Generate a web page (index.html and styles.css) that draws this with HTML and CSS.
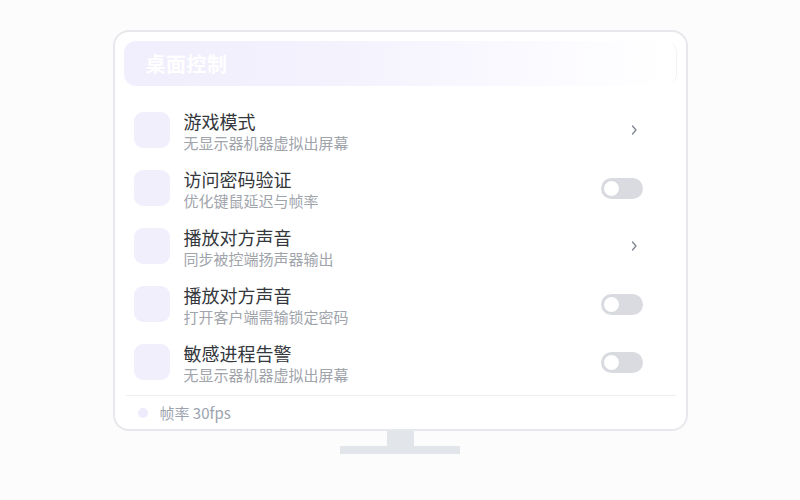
FILE: index.html
```html
<!DOCTYPE html>
<html lang="zh-CN">
<head>
<meta charset="utf-8">
<link rel="stylesheet" href="styles.css">
</head>
<body>
<div class="stage">
  <div class="monitor">
    <div class="header">
      <span class="header-title">桌面控制</span>
      <span class="header-badge">60</span>
    </div>
    <div class="list">
      <div class="row">
        <div class="icon"></div>
        <div class="texts"><div class="title">游戏模式</div><div class="sub">无显示器机器虚拟出屏幕</div></div>
        <div class="action"><svg class="chev" width="8" height="12" viewBox="0 0 8 12"><path d="M2.5 2 L6 6 L2.5 10" fill="none" stroke="#7b818b" stroke-width="1.2" stroke-linecap="round" stroke-linejoin="round"/></svg></div>
      </div>
      <div class="row">
        <div class="icon"></div>
        <div class="texts"><div class="title">访问密码验证</div><div class="sub">优化键鼠延迟与帧率</div></div>
        <div class="action"><span class="toggle"><span class="knob"></span></span></div>
      </div>
      <div class="row">
        <div class="icon"></div>
        <div class="texts"><div class="title">播放对方声音</div><div class="sub">同步被控端扬声器输出</div></div>
        <div class="action"><svg class="chev" width="8" height="12" viewBox="0 0 8 12"><path d="M2.5 2 L6 6 L2.5 10" fill="none" stroke="#7b818b" stroke-width="1.2" stroke-linecap="round" stroke-linejoin="round"/></svg></div>
      </div>
      <div class="row">
        <div class="icon"></div>
        <div class="texts"><div class="title">播放对方声音</div><div class="sub">打开客户端需输锁定密码</div></div>
        <div class="action"><span class="toggle"><span class="knob"></span></span></div>
      </div>
      <div class="row">
        <div class="icon"></div>
        <div class="texts"><div class="title">敏感进程告警</div><div class="sub">无显示器机器虚拟出屏幕</div></div>
        <div class="action"><span class="toggle"><span class="knob"></span></span></div>
      </div>
    </div>
    <div class="footer">
      <span class="dot"></span>
      <span class="footer-text">帧率 30fps</span>
    </div>
  </div>
  <div class="neck"></div>
  <div class="base"></div>
</div>
</body>
</html>
```

FILE: styles.css
```css
html, body {
  margin: 0;
  padding: 0;
  background: #fcfcfd;
  font-family: "Noto Sans CJK SC", "Noto Sans", sans-serif;
}
.stage {
  width: 800px;
  height: 500px;
  display: flex;
  flex-direction: column;
  align-items: center;
  padding-top: 30px;
  box-sizing: border-box;
}
.monitor {
  width: 575px;
  height: 401px;
  box-sizing: border-box;
  border: 2px solid #e6e8ec;
  border-radius: 16px;
  background: #ffffff;
  padding: 9px 9px 0;
  display: flex;
  flex-direction: column;
}
.header {
  height: 45px;
  flex: none;
  border-radius: 12px;
  background: linear-gradient(90deg, #f1eefd 0%, #f4f2fd 40%, #fbfaff 75%, #ffffff 100%);
  border-right: 1px solid #f1f2f4;
  display: flex;
  align-items: center;
  justify-content: space-between;
  padding: 0 22px;
  box-sizing: border-box;
}
.header-title {
  color: #ffffff;
  font-size: 20px;
  font-weight: 700;
  letter-spacing: 0.5px;
}
.header-badge {
  color: #ffffff;
  font-size: 14px;
  font-weight: 700;
  margin-right: 8px;
}
.list {
  margin-top: 15px;
  display: flex;
  flex-direction: column;
}
.row {
  height: 58px;
  box-sizing: border-box;
  padding: 11px 34px 11px 10px;
  display: flex;
  align-items: flex-start;
}
.icon {
  width: 36px;
  height: 36px;
  border-radius: 9px;
  background: #f2effd;
  flex: none;
}
.texts {
  margin-left: 14px;
  margin-top: -2px;
  flex: 1;
}
.title {
  font-size: 18px;
  line-height: 23px;
  color: #34373c;
}
.sub {
  font-size: 15px;
  line-height: 20px;
  color: #a0a4ab;
}
.action {
  align-self: center;
  width: 42px;
  display: flex;
  justify-content: flex-end;
}
.chev {
  display: block;
  margin-right: 5px;
}
.toggle {
  width: 42px;
  height: 21px;
  border-radius: 11px;
  background: #d9dbe1;
  display: flex;
  align-items: center;
  padding-left: 2px;
  box-sizing: border-box;
}
.knob {
  width: 17px;
  height: 17px;
  border-radius: 50%;
  background: #ffffff;
  box-sizing: border-box;
  border: 1px solid #d3d6dc;
}
.footer {
  margin-top: 4px;
  border-top: 1px solid #eceef1;
  margin-left: 2px;
  margin-right: 1px;
  flex: 1;
  display: flex;
  align-items: center;
  padding-left: 12px;
}
.dot {
  width: 10px;
  height: 10px;
  border-radius: 50%;
  background: #eeebfd;
}
.footer-text {
  margin-left: 12px;
  font-size: 15px;
  color: #9ca3af;
}
.neck {
  width: 27px;
  height: 15px;
  background: #e2e5ea;
}
.base {
  width: 120px;
  height: 8px;
  background: #e2e5ea;
}
```
